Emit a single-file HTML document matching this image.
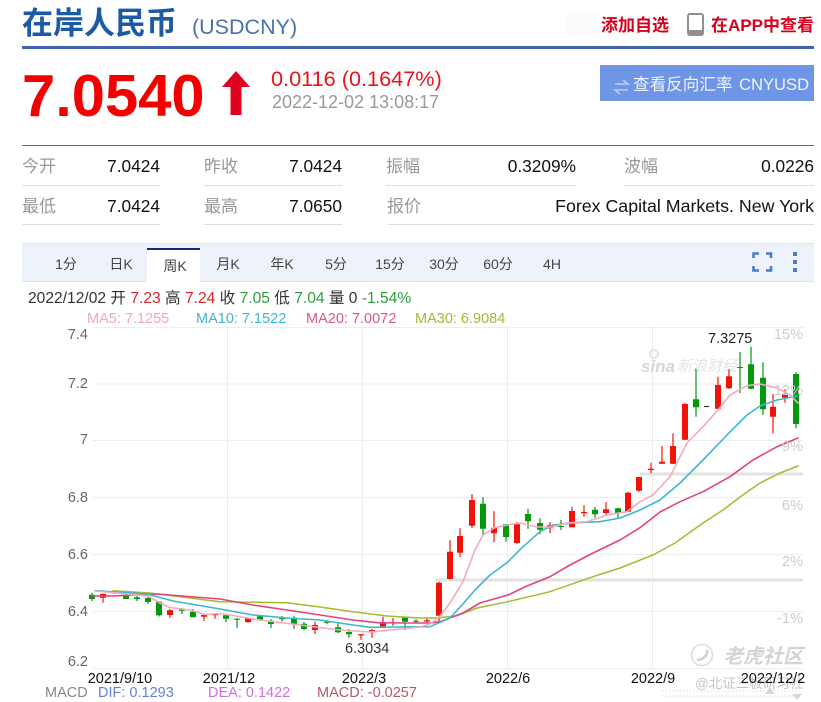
<!DOCTYPE html>
<html lang="zh"><head><meta charset="utf-8"><title>在岸人民币</title>
<style>
html,body{margin:0;padding:0;background:#fff;width:821px;height:702px;overflow:hidden}
svg{display:block}
text{font-family:"Liberation Sans","Noto Sans CJK SC",sans-serif}
.lb{font-size:17px;fill:#999}
.v{font-size:17.3px;fill:#111;text-anchor:end}
.t{font-size:14px;fill:#444;text-anchor:middle}
.y{font-size:14.5px;fill:#666;text-anchor:end}
.r{font-size:14.5px;fill:#ccc;text-anchor:end}
.x{font-size:14.5px;fill:#111;text-anchor:middle}
.ma{font-size:14.5px}
</style></head><body>
<svg width="821" height="702" viewBox="0 0 821 702" xmlns="http://www.w3.org/2000/svg">
<!-- header -->
<text x="22" y="34" font-size="31" font-weight="700" fill="#1d5aa6">在岸人民币</text>
<text x="192" y="34" font-size="21.5" fill="#4a72a8">(USDCNY)</text>
<rect x="566" y="11" width="32" height="25" fill="#fcfcfc"/>
<text x="601" y="31" font-size="17" font-weight="700" fill="#d6001c">添加自选</text>
<rect x="687" y="13" width="17" height="23" rx="3" fill="#8f8f8f"/>
<rect x="689" y="15" width="13" height="15" fill="#fff"/>
<text x="711" y="31" font-size="17" font-weight="700" fill="#d6001c">在APP中查看</text>
<rect x="22" y="46" width="792" height="3" fill="#3f63b1"/>
<!-- price -->
<text x="22" y="116" font-size="59.7" font-weight="700" fill="#f40000">7.0540</text>
<path d="M236 71L250 87H241.5V115H230.5V87H222Z" fill="#e0001f"/>
<text x="271" y="86" font-size="21.7" fill="#e8141c">0.0116 (0.1647%)</text>
<text x="272" y="108" font-size="18" fill="#999">2022-12-02 13:08:17</text>
<rect x="600" y="65" width="214" height="36" fill="#6f96e6"/>
<path d="M615 84H628L623 80M628 90H615L620 94" fill="none" stroke="#bccdf4" stroke-width="1.5"/>
<text x="633" y="90" font-size="16.6" fill="#eef3fd">查看反向汇率</text>
<text x="739" y="90" font-size="16.6" fill="#eef3fd">CNYUSD</text>
<!-- stats -->
<rect x="22" y="145" width="792" height="1" fill="#2d78b6"/>
<text class="lb" x="22" y="172">今开</text><text class="v" x="160" y="172">7.0424</text>
<text class="lb" x="204" y="172">昨收</text><text class="v" x="342" y="172">7.0424</text>
<text class="lb" x="386" y="172">振幅</text><text class="v" x="576" y="172">0.3209%</text>
<text class="lb" x="624" y="172">波幅</text><text class="v" x="814" y="172">0.0226</text>
<text class="lb" x="22" y="212">最低</text><text class="v" x="160" y="212">7.0424</text>
<text class="lb" x="204" y="212">最高</text><text class="v" x="342" y="212">7.0650</text>
<text class="lb" x="387" y="212">报价</text><text class="v" x="814" y="212" style="font-size:17.8px">Forex Capital Markets. New York</text>
<path d="M22 185.5H160M204 185.5H342M386 185.5H576M624 185.5H814M22 224.5H160M204 224.5H342M388 224.5H576M576 224.5H814" stroke="#ddd" fill="none"/>
<!-- tabs -->
<rect x="22" y="243" width="792" height="39" fill="#eef3fb"/>
<path d="M22 243.5H814M22 281.5H814" stroke="#dfe5ee" fill="none"/>
<rect x="147" y="249" width="53" height="33" fill="#fff"/>
<rect x="147" y="248" width="53" height="2" fill="#14297c"/>
<text class="t" x="66" y="269">1分</text>
<text class="t" x="121" y="269">日K</text>
<text class="t" x="175" y="271">周K</text>
<text class="t" x="228" y="269">月K</text>
<text class="t" x="282" y="269">年K</text>
<text class="t" x="336" y="269">5分</text>
<text class="t" x="390" y="269">15分</text>
<text class="t" x="444" y="269">30分</text>
<text class="t" x="498" y="269">60分</text>
<text class="t" x="552" y="269">4H</text>
<path d="M753.5 258V253.5H759M766 253.5H771V258M771 266V270.5H766M759 270.5H753.5V266" fill="none" stroke="#4a7cc8" stroke-width="2.6"/>
<rect x="793" y="252" width="4" height="4" fill="#4a7cc8"/><rect x="793" y="260" width="4" height="4" fill="#4a7cc8"/><rect x="793" y="268" width="4" height="4" fill="#4a7cc8"/>
<!-- info -->
<text x="28" y="303" font-size="15.6" fill="#333">2022/12/02 开 <tspan fill="#d8242b">7.23</tspan> 高 <tspan fill="#d8242b">7.24</tspan> 收 <tspan fill="#2e9e3c">7.05</tspan> 低 <tspan fill="#2e9e3c">7.04</tspan> 量 0 <tspan fill="#2e9e3c">-1.54%</tspan></text>
<text class="ma" x="87" y="323" fill="#f2a5c4">MA5: 7.1255</text>
<text class="ma" x="196" y="323" fill="#3cb8d0">MA10: 7.1522</text>
<text class="ma" x="306" y="323" fill="#e0558a">MA20: 7.0072</text>
<text class="ma" x="415" y="323" fill="#9fba3a">MA30: 6.9084</text>
<!-- grid -->
<path d="M92 327.5H803M92 384H803M92 440.5H803M92 497.5H803M92 554.5H803M92 611.5H803M92 668.5H803" stroke="#eee" fill="none"/>
<path d="M227.5 327V669M362.5 327V669M507.5 327V669M652.5 327V669" stroke="#ececec" fill="none"/>
<path d="M640 474H803M436 580H803" stroke="#e2e2e2" stroke-width="3" fill="none"/>
<text class="y" x="88" y="339">7.4</text><text class="y" x="88" y="388">7.2</text><text class="y" x="88" y="444">7</text>
<text class="y" x="88" y="502">6.8</text><text class="y" x="88" y="559">6.6</text><text class="y" x="88" y="616">6.4</text><text class="y" x="88" y="666">6.2</text>
<!-- watermark sina -->
<text x="641" y="372" font-size="17" font-style="italic" font-weight="700" fill="#d6d6d6">sina</text>
<circle cx="654" cy="354" r="4" fill="none" stroke="#e2e2e2" stroke-width="2"/>
<text x="677" y="371" font-size="15" font-style="italic" fill="#e2e2e2">新浪财经</text>
<!-- candles: wicks -->
<path fill="none" stroke="#f01408" stroke-width="1.2" d="M103 594V602.7M170 609V617.7M204 615V621M215 614V618.7M248 618V623M315 621.7V634M361 634V639.7M372 629V637.7M383 616.7V628M393 618V625.7M427 618V623M439 581.7V621.7M450 540.3V579.3M460 528.3V557.3M472 494.3V528.3M494 511.3V542.3M517 521.7V543.7M550 522V533.3M572 506.7V527.3M584 505.3V516.7M606 502.3V514.7M628 492V512.3M639 477V491.7M651 462.7V473.3M662 446V464M673 433.3V464M685 402.7V440M718 376.7V409.3M729 369.3V389M773 394V433.3M785 389.3V402.7"/>
<path fill="none" stroke="#f01408" stroke-width="6" d="M103 593.7V597.7M170 610.3V615M204 615V616.7M215 614V615.2M248 618.3V622M315 625V630M361 634.3V635.5M372 630V632.3M383 623.3V627.3M393 622.3V623.5M427 620.3V621.5M439 582.7V615.7M450 551.7V579M460 536V552.7M472 500V525.7M494 527.7V533.3M517 524.3V543M550 525.3V528.3M572 511V527.3M584 512V513.2M606 509.3V513M628 492.7V511.7M639 477V490.7M651 468.7V470M662 461.7V463.7M673 446V463.7M685 404V439.7M718 385V408.7M729 376.3V388.3M773 406.7V416.7M785 394V397.7"/>
<path fill="none" stroke="#009a0c" stroke-width="1.2" d="M92 592.7V601M114 590V594M126 593V599M137 596V601M148 597V604M159 601V616.5M182 608V614M193 609V617.5M226 615V622M237 617.7V627.7M260 615V621M271 619V628M282 616V621.5M294 616V629M304 622V630M327 620.3V624.3M338 623.3V633.3M349 629V637.7M405 617V630M416 619V623.3M483 497V535.7M506 524V541.7M528 508.7V528.7M540 518.3V534.3M561 520V530M595 506.7V517.7M618 507.7V518.7M696 368.7V416.7M740 352V393.3M751 346.7V389.3M763 362.3V415M796 372.3V428.3"/>
<path fill="none" stroke="#009a0c" stroke-width="6" d="M92 594.7V599M114 591.5V593.5M126 596V599M137 597.3V599M148 598V602M159 601.7V615.3M182 609V610.7M193 611.7V617.3M226 615.3V618.7M237 618.7V619.7M260 616.3V620.3M271 620.7V624M282 618.3V619.3M294 617.7V624M304 623.7V629M327 621.7V622.7M338 627.3V632.3M349 632V634.3M405 617.3V621.7M416 620.7V621.7M483 503.7V528.7M506 524.3V537M528 514V521.3M540 523V529.7M561 526V527M595 509.7V514.3M618 508.3V513M696 399.3V407.3M740 367V368M751 364.3V388.7M763 377.7V409.3M796 374V424"/>
<path d="M704 406.5H709" stroke="#333" stroke-width="1.2"/>
<!-- moving averages -->
<g fill="none" stroke-linejoin="round" stroke-linecap="round">
<path stroke="#a5bb2e" stroke-width="1.5" d="M113 590.7L150 593L220 601.7L287 602.7L320 607L353 611.7L387 616L420 618L437 618L457 615.7L477 608L508 601.7L550 591.7L593 576.7L620 568L653 555L675 543L703 523L723 510L740 497L760 483L780 473L798 466"/>
<path stroke="#e0447f" stroke-width="1.6" d="M92 596L113 596L157 594L220 599L253 605L287 610L320 615L353 620L377 622.7L407 623L430 623L440 621.7L463 613L480 603L508 595L527 586L550 576.7L570 565L593 553L620 540L640 527.7L660 512L680 501.7L703 491.7L730 476.7L753 460L777 446.7L798 438"/>
<path stroke="#3cb8d0" stroke-width="1.6" d="M95 590.7L147 594L173 601L220 609L253 615L287 618L320 620L353 625L370 627.3L393 627L430 626.7L450 618L462 605L475 590L490 575L507 562.7L523 546.7L540 531.7L553 525L577 522.7L600 521.7L620 518L640 510L660 500L680 483L703 460L727 435L747 415L760 406L777 400L797 396"/>
<path stroke="#f5a9c3" stroke-width="1.6" d="M95 591L148 596L160 603L170 607.5L190 610L205 614.5L220 613.5L260 620L300 625L340 630L370 632L390 630L420 627L430 624L440 616L450 603L463 581.7L475 550L483 535L494 528L507 525L520 523L537 527L553 527L567 523L587 521.7L607 515L627 511.7L640 501.7L653 495L670 476.7L687 443L703 426.7L718 410L730 395L747 385.7L760 384L777 388L790 395L798 403"/>
</g>
<text class="r" x="803" y="339">15%</text><text class="r" x="803" y="395">12%</text><text class="r" x="803" y="451">9%</text>
<text class="r" x="803" y="510">6%</text><text class="r" x="803" y="566">2%</text><text class="r" x="803" y="623">-1%</text>
<text x="708" y="343" font-size="14.5" fill="#222">7.3275</text>
<text x="345" y="653" font-size="14.5" fill="#333">6.3034</text>
<!-- tiger watermark -->
<circle cx="702" cy="655" r="10.5" fill="none" stroke="#dcdcdc" stroke-width="1.5"/>
<path d="M697 660C703 660 708 655 707 650" fill="none" stroke="#d0d0d0" stroke-width="2.5"/>
<text x="723" y="663" font-size="20" font-weight="700" font-style="italic" fill="#d4d4d4">老虎社区</text>
<text x="695" y="688" font-size="13.5" fill="#c4c4c4">@北证三板研习社</text>
<path d="M662 691H800M662 696H800" stroke="#ddd" stroke-dasharray="1.5 2" fill="none"/>
<path d="M770 687L775 694H765ZM792 694H802L797 700Z" fill="#d8d8d8"/>
<!-- x axis -->
<text class="x" x="120" y="683">2021/9/10</text><text class="x" x="229" y="683">2021/12</text>
<text class="x" x="364" y="683">2022/3</text><text class="x" x="508" y="683">2022/6</text>
<text class="x" x="653" y="683">2022/9</text><text class="x" x="773" y="683">2022/12/2</text>
<!-- macd -->
<text x="45" y="697" font-size="14.5" fill="#888">MACD</text>
<text x="98" y="697" font-size="14.5" fill="#6a7ed8">DIF: 0.1293</text>
<text x="208" y="697" font-size="14.5" fill="#d070e0">DEA: 0.1422</text>
<text x="317" y="697" font-size="14.5" fill="#b35a68">MACD: -0.0257</text>
</svg>
</body></html>
